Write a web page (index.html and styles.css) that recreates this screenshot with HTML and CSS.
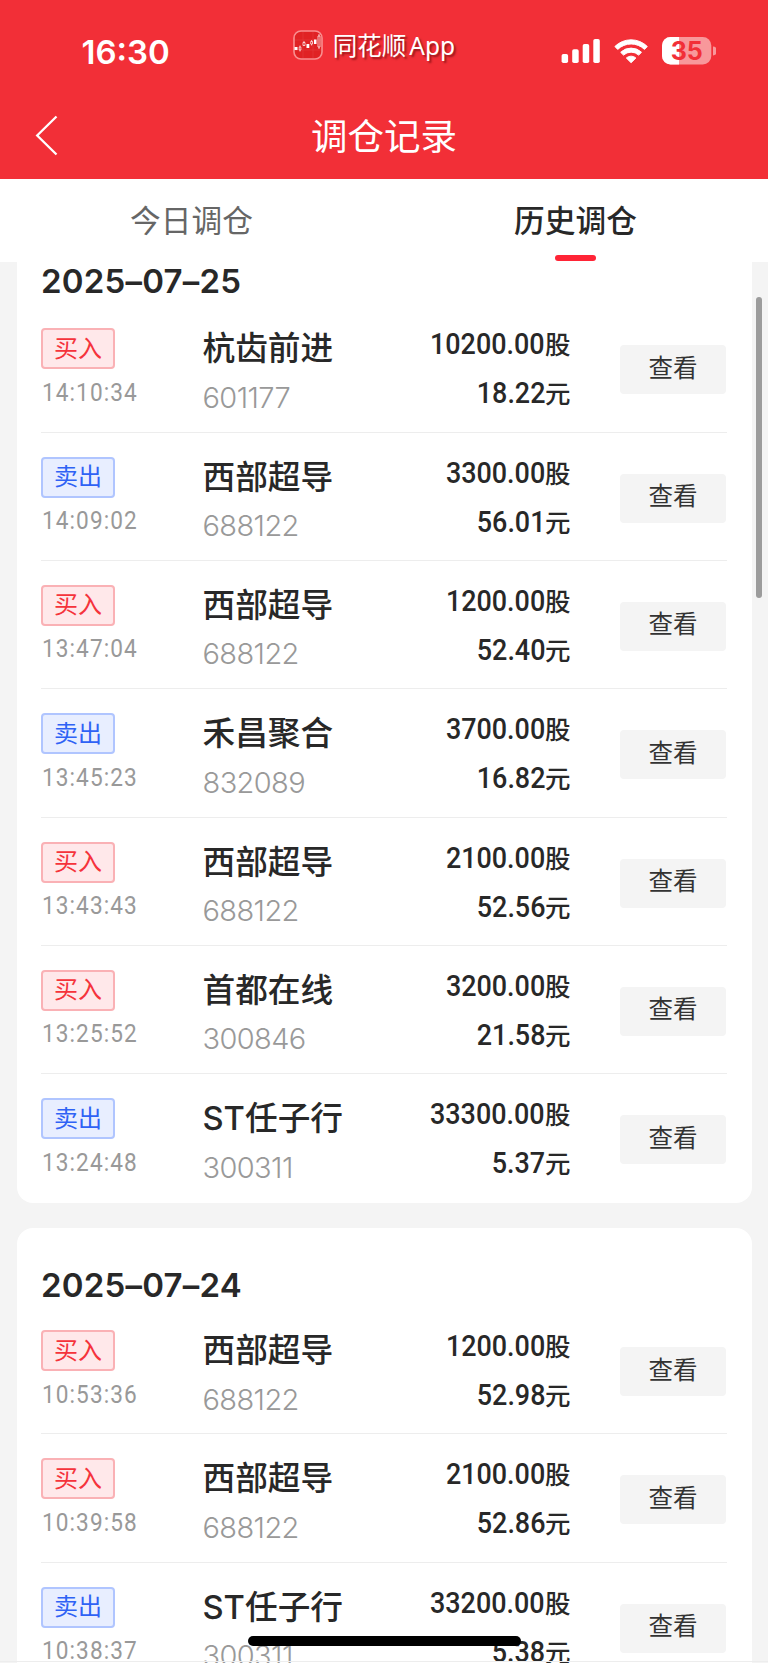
FILE: index.html
```html
<!DOCTYPE html>
<html lang="zh-CN">
<head>
<meta charset="utf-8">
<title>调仓记录</title>
<link rel="stylesheet" href="styles.css">
</head>
<body>
<div class="screen">
<header class="header">
  <div class="status">
    <div class="clock">16:30</div>
    <div class="app">
      <svg width="30" height="30" viewBox="0 0 30 30"><rect x="1" y="1" width="28" height="28" rx="7" fill="#e02224" stroke="#f98f90" stroke-width="1.6"/><path d="M2 10H28M2 20H28M10 2V28M20 2V28" stroke="#e64040" stroke-width=".5"/><path d="M1.500 17h3v3h-3zM13.500 14h2.800v4h-2.800zM21 9.500h2.500v4.500h-2.500z" fill="#fff"/><path d="M6.200 17h1.700v3H6.200zM7 15.500V17M7 20v1.500M10 12.500h2v3h-2zM11 11v1.500M17.700 11.500h1.800v2.500h-1.800zM18.600 10v1.500M18.600 14v1.500M25 6h2v11h-2zM26 4v2M26 17v2" fill="none" stroke="#fff" stroke-width=".7"/></svg>
      <span>同花顺<b>App</b></span>
    </div>
    <div class="indicators">
      <svg width="156" height="30" viewBox="0 0 156 30">
        <g fill="#fff"><rect x="1.600" y="18" width="6.500" height="9" rx="1.800"/><rect x="12.200" y="13.300" width="6.500" height="13.700" rx="1.800"/><rect x="22.700" y="8" width="6.500" height="19" rx="1.800"/><rect x="33.300" y="3" width="6.500" height="24" rx="1.800"/>
        <path d="M54.900 10.500A23 23 0 0 1 87.300 10.500L84.500 13.400A19.300 19.300 0 0 0 57.700 13.400Z" stroke="#fff" stroke-linejoin="round"/>
        <path d="M60.700 16.300A15 15 0 0 1 81.500 16.300L78.700 19.100A11.200 11.200 0 0 0 63.500 19.100Z" stroke="#fff" stroke-linejoin="round"/>
        <path d="M66.300 22A7.200 7.200 0 0 1 75.900 22L71.100 26.700Z" stroke="#fff" stroke-linejoin="round"/></g>
        <clipPath id="charge"><path d="M102 0h17v30h-17z"/></clipPath>
        <rect x="102" y="1" width="49.300" height="27.500" rx="8.500" fill="#f8989b"/>
        <rect x="102" y="1" width="49.300" height="27.500" rx="8.500" fill="#fff" clip-path="url(#charge)"/>
        <path d="M153 10.500a4.500 4.500 0 0 1 0 9z" fill="#f8989b"/>
        <text x="126.800" y="23.800" class="charge-text">35</text>
      </svg>
    </div>
  </div>
  <div class="navbar">
    <svg class="back" width="24" height="42" viewBox="0 0 24 42"><path d="M21.500 1.500L2.200 20.500L21.500 39.500" fill="none" stroke="#fff" stroke-width="2.300"/></svg>
    <h1 class="title">调仓记录</h1>
  </div>
</header>
<nav class="tabs"><div class="tab">今日调仓</div><div class="tab active">历史调仓</div></nav>
<main class="records" id="records"></main>
<div class="scrollbar"></div>
<div class="home-bar"></div>
<div class="edge"></div>
</div>
<script src="records.js"></script>
</body>
</html>
```

FILE: styles.css
```css
* { box-sizing: border-box; }
body { margin: 0; background: #f4f4f4; color: #282828; font-family: Inter, "Noto Sans CJK SC", sans-serif; }
.screen { position: relative; width: 768px; height: 1663px; overflow: hidden; background: #f4f4f4; }
.header { height: 179.300px; background: #f22f37; color: #fff; }
.status { height: 94px; display: grid; grid-template-columns: 293.300px 266.700px 1fr; }
.clock { padding: 31.500px 0 0 81.500px; font-size: 33px; line-height: 40px; font-weight: 600; }
.app { display: flex; gap: 9.500px; padding-top: 29.500px; }
.app span { font-size: 24.500px; line-height: 29px; white-space: nowrap; font-family: "Noto Sans CJK SC", sans-serif; text-shadow: 2px 2px 2px rgba(80,0,0,.55); }
.app b { font-weight: 400; font-family: "Noto Sans", sans-serif; margin-left: 3px; }
.indicators { padding-top: 36px; }
.charge-text { font: 700 25px Inter, sans-serif; fill: #f22f37; text-anchor: middle; }
.navbar { height: 84px; display: grid; grid-template-columns: 70px 1fr 70px; align-items: center; }
.back { margin-left: 35px; }
.title { margin: 0; padding-top: 2px; text-align: center; font-size: 36.500px; line-height: 50px; font-weight: 400; }
.tabs { height: 82.300px; display: flex; background: #fff; }
.tab { flex: 1; display: flex; flex-direction: column; align-items: center; padding: 20px 1px 0 0; font-size: 30.700px; line-height: 44px; color: #666; }
.tab.active { color: #282828; font-weight: 500; }
.tab.active::after { content: ""; width: 41px; height: 6.500px; margin-top: 11.300px; border-radius: 3px; background: #ff2436; }
.records { display: flex; flex-direction: column; gap: 25.200px; padding: 0 16.500px; }
.card { background: #fff; border-radius: 16px; padding: 0 24.500px; }
.card:first-child { border-radius: 0 0 16px 16px; }
.date { height: 78.300px; padding-top: 37px; margin: 0; font-size: 33px; line-height: 40px; font-weight: 600; letter-spacing: .2px; white-space: nowrap; }
.card:first-child .date { height: 42.600px; padding: 0; line-height: 39px; }
.row { height: 128.350px; display: grid; grid-template-columns: 161.500px 168px 200px 49.500px 106px; border-bottom: 1px solid #ededed; }
.row:last-child { border-bottom-color: transparent; }
.side { padding-top: 24px; }
.tag { display: flex; width: 74px; height: 41px; align-items: center; justify-content: center; border: 2px solid; border-radius: 4px; font-size: 24px; line-height: 36px; }
.buy { color: #f5333b; background: #ffe8ea; border-color: #fab1b5; }
.sell { color: #2f62f5; background: #e8eeff; border-color: #b0c5ff; }
.time { margin: 6.500px 0 0 1px; font: 26.300px/32px Roboto, sans-serif; letter-spacing: 1.250px; color: #999; transform: scaleX(.86); transform-origin: 0 50%; white-space: nowrap; }
.name { padding-top: 20px; font-size: 32.700px; line-height: 48px; font-weight: 500; white-space: nowrap; }
.code { font-size: 29px; line-height: 40px; margin-top: 5.500px; font-weight: 350; letter-spacing: -.6px; color: #999; }
.amount { display: flex; flex-direction: column; align-items: flex-end; padding-top: 15px; }
.figure { font: 500 25.500px/48px "Noto Sans CJK SC", sans-serif; white-space: nowrap; display: flex; align-items: baseline; }
.num { font-family: Roboto, sans-serif; font-size: 28.800px; transform: scaleX(.935); transform-origin: 100% 50%; }
.view { grid-column: 5; margin-top: 41px; height: 49px; border: 0; padding: 0 0 6px; border-radius: 4px; background: #f4f4f4; color: #333; font: 24.500px/40px "Noto Sans CJK SC", sans-serif; }
.scrollbar { position: absolute; left: 756px; top: 297px; width: 6px; height: 301px; border-radius: 3px; background: #9c9c9c; }
.home-bar { position: absolute; left: 247.500px; top: 1636px; width: 273.500px; height: 10px; border-radius: 5px; background: #000; }
.edge { position: absolute; left: 0; right: 0; top: 1661px; height: 1px; background: #ededed; }
```

FILE: records.js
```js
const days = [
  ["2025–07–25", [
    ["买入", "14:10:34", "杭齿前进", "601177", "10200.00", "18.22"],
    ["卖出", "14:09:02", "西部超导", "688122", "3300.00", "56.01"],
    ["买入", "13:47:04", "西部超导", "688122", "1200.00", "52.40"],
    ["卖出", "13:45:23", "禾昌聚合", "832089", "3700.00", "16.82"],
    ["买入", "13:43:43", "西部超导", "688122", "2100.00", "52.56"],
    ["买入", "13:25:52", "首都在线", "300846", "3200.00", "21.58"],
    ["卖出", "13:24:48", "ST任子行", "300311", "33300.00", "5.37"]]],
  ["2025–07–24", [
    ["买入", "10:53:36", "西部超导", "688122", "1200.00", "52.98"],
    ["买入", "10:39:58", "西部超导", "688122", "2100.00", "52.86"],
    ["卖出", "10:38:37", "ST任子行", "300311", "33200.00", "5.38"]]]
];
const row = ([side, time, name, code, qty, price]) => `<div class="row">
  <div class="side"><div class="tag ${side === "买入" ? "buy" : "sell"}">${side}</div><div class="time">${time}</div></div>
  <div><div class="name">${name}</div><div class="code">${code}</div></div>
  <div class="amount"><div class="figure"><span class="num">${qty}</span>股</div><div class="figure"><span class="num">${price}</span>元</div></div>
  <button class="view">查看</button></div>`;
document.getElementById("records").innerHTML = days.map(([date, rows]) =>
  `<section class="card"><h2 class="date">${date}</h2>${rows.map(row).join("")}</section>`).join("");
```
